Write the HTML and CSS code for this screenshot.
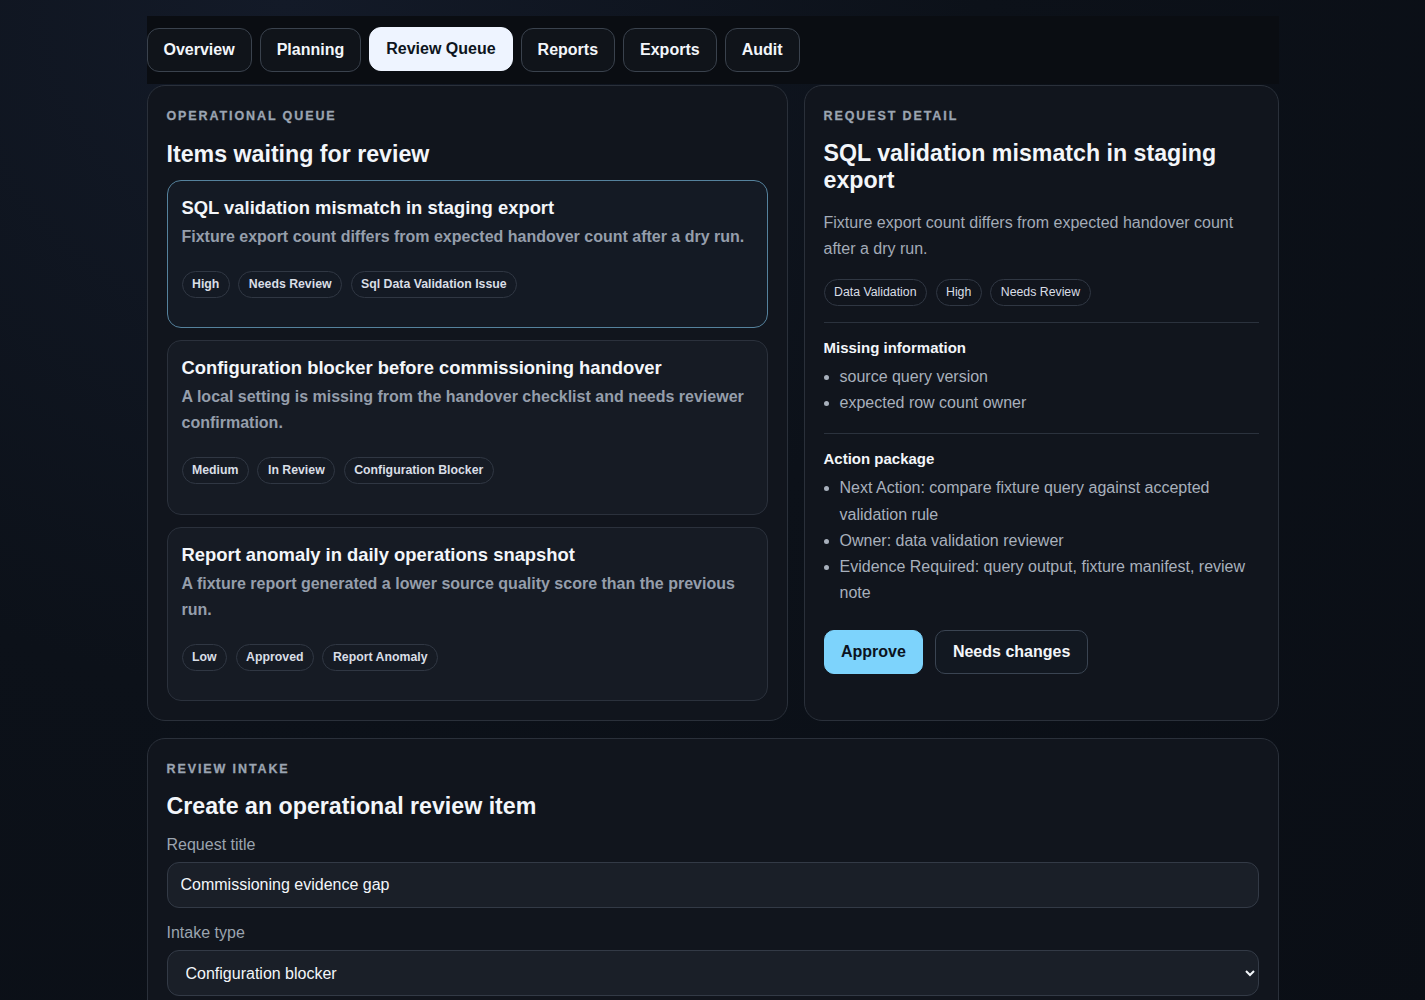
FILE: index.html
```html
<!DOCTYPE html>
<html lang="en">
<head>
    <meta charset="UTF-8">
    <meta name="viewport" content="width=device-width, initial-scale=1.0">
    <title>Review Queue</title>
    <link rel="stylesheet" href="styles.css">
</head>
<body>
    <div class="page">
        <nav class="tabs">
            <button class="tab">Overview</button>
            <button class="tab">Planning</button>
            <button class="tab active">Review Queue</button>
            <button class="tab">Reports</button>
            <button class="tab">Exports</button>
            <button class="tab">Audit</button>
        </nav>

        <div class="columns">
            <section class="panel">
                <p class="eyebrow">Operational queue</p>
                <h2 class="panel-title">Items waiting for review</h2>
                <div class="queue">
                    <article class="queue-item selected">
                        <h3>SQL validation mismatch in staging export</h3>
                        <p>Fixture export count differs from expected handover count after a dry run.</p>
                        <div class="tags">
                            <span class="tag">High</span>
                            <span class="tag">Needs Review</span>
                            <span class="tag">Sql Data Validation Issue</span>
                        </div>
                    </article>
                    <article class="queue-item">
                        <h3>Configuration blocker before commissioning handover</h3>
                        <p>A local setting is missing from the handover checklist and needs reviewer confirmation.</p>
                        <div class="tags">
                            <span class="tag">Medium</span>
                            <span class="tag">In Review</span>
                            <span class="tag">Configuration Blocker</span>
                        </div>
                    </article>
                    <article class="queue-item">
                        <h3>Report anomaly in daily operations snapshot</h3>
                        <p>A fixture report generated a lower source quality score than the previous run.</p>
                        <div class="tags">
                            <span class="tag">Low</span>
                            <span class="tag">Approved</span>
                            <span class="tag">Report Anomaly</span>
                        </div>
                    </article>
                </div>
            </section>

            <section class="panel detail">
                <p class="eyebrow">Request detail</p>
                <h2 class="detail-title">SQL validation mismatch in staging export</h2>
                <p class="detail-text">Fixture export count differs from expected handover count after a dry run.</p>
                <div class="tags plain">
                    <span class="tag">Data Validation</span>
                    <span class="tag">High</span>
                    <span class="tag">Needs Review</span>
                </div>
                <div class="detail-block">
                    <h4>Missing information</h4>
                    <ul>
                        <li>source query version</li>
                        <li>expected row count owner</li>
                    </ul>
                </div>
                <div class="detail-block">
                    <h4>Action package</h4>
                    <ul>
                        <li>Next Action: compare fixture query against accepted validation rule</li>
                        <li>Owner: data validation reviewer</li>
                        <li>Evidence Required: query output, fixture manifest, review note</li>
                    </ul>
                </div>
                <div class="actions">
                    <button class="btn primary">Approve</button>
                    <button class="btn">Needs changes</button>
                </div>
            </section>
        </div>

        <section class="panel intake">
            <p class="eyebrow">Review intake</p>
            <h2 class="panel-title">Create an operational review item</h2>
            <form class="intake-form">
                <label for="title">Request title</label>
                <input type="text" id="title" value="Commissioning evidence gap">
                <label for="type">Intake type</label>
                <select id="type">
                    <option>Configuration blocker</option>
                    <option>Data validation</option>
                    <option>Report anomaly</option>
                </select>
            </form>
        </section>
    </div>
</body>
</html>
```

FILE: styles.css
```css
* {
    box-sizing: border-box;
}
body {
    margin: 0;
    font-family: "Liberation Sans", Arial, sans-serif;
    color: #f3f6fa;
    background: radial-gradient(circle at 20% 0%, #131a28 0%, #0c1119 45%, #0a0e15 100%);
    min-height: 100vh;
}
.page {
    width: 1132px;
    margin: 0 auto;
    padding-top: 16px;
}
.tabs {
    display: flex;
    gap: 8px;
    padding: 12px 0;
    background-color: #0a0d12;
}
.tab {
    font-family: inherit;
    font-size: 16px;
    font-weight: 700;
    line-height: 18px;
    padding: 12px 16px;
    color: #f3f6fa;
    background-color: #10141a;
    border: 1px solid #3a424d;
    border-radius: 12px;
    cursor: pointer;
}
.tab.active {
    background-color: #eef4ff;
    color: #0d1420;
    border-color: #eef4ff;
    transform: translateY(-1px);
}
.columns {
    display: grid;
    grid-template-columns: 641px 475px;
    gap: 16px;
    margin-top: 1px;
}
.panel {
    background-color: #11151d;
    border: 1px solid #2a303a;
    border-radius: 18px;
    padding: 20px 19px 19px;
}
.eyebrow {
    margin: 3px 0 0;
    font-size: 12.5px;
    font-weight: 700;
    letter-spacing: 1.9px;
    text-transform: uppercase;
    color: #9ba4b1;
    -webkit-text-stroke: 0.3px #9ba4b1;
}
.panel-title {
    margin: 18px 0 13px;
    font-size: 23.2px;
    line-height: 26px;
}
.queue {
    display: flex;
    flex-direction: column;
    gap: 12px;
}
.queue-item {
    background-color: #161b24;
    border: 1px solid #2b313c;
    border-radius: 14px;
    padding: 15px 14px 29.4px;
}
.queue-item.selected {
    background-color: #141a24;
    border-color: #55829d;
}
.queue-item h3 {
    margin: 0;
    font-size: 18.4px;
    line-height: 24px;
}
.queue-item p {
    margin: 4px 0 0;
    font-size: 16px;
    font-weight: 700;
    line-height: 26px;
    color: #959eab;
}
.tags {
    display: flex;
    flex-wrap: wrap;
    gap: 8.5px;
    margin-top: 21px;
}
.tag {
    font-size: 12.3px;
    font-weight: 700;
    line-height: 15px;
    padding: 5px 9.5px;
    color: #d9dee6;
    border: 1px solid #303743;
    border-radius: 999px;
}
.tags.plain {
    margin-top: 17px;
}
.tags.plain .tag {
    font-weight: 400;
}
.detail-title {
    margin: 17px 0 0;
    font-size: 23.2px;
    line-height: 27px;
}
.detail-text {
    margin: 16px 0 0;
    font-size: 16px;
    line-height: 26px;
    color: #a3abb7;
}
.detail-block {
    border-top: 1px solid #2b323d;
    margin-top: 16px;
    padding-top: 16px;
}
.detail-block h4 {
    margin: 0;
    font-size: 15px;
    line-height: 18px;
}
.detail-block ul {
    margin: 7px 0 0;
    padding-left: 16px;
}
.detail-block li {
    font-size: 16px;
    line-height: 26.2px;
    color: #a8b0bc;
}
.detail-block + .detail-block {
    margin-top: 17px;
}
.actions {
    display: flex;
    gap: 12px;
    margin-top: 24px;
    padding-bottom: 26px;
}
.btn {
    font-family: inherit;
    font-size: 16px;
    font-weight: 700;
    line-height: 18px;
    padding: 12px 16.5px;
    color: #f3f6fa;
    background-color: #121821;
    border: 1px solid #3a4452;
    border-radius: 10px;
    cursor: pointer;
}
.btn.primary {
    background-color: #7dd3fc;
    border-color: #7dd3fc;
    color: #0b1220;
}
.intake {
    margin-top: 17px;
    padding-bottom: 40px;
}
.intake .panel-title {
    margin: 17px 0 0;
}
.intake-form label {
    display: block;
    margin-top: 15px;
    font-size: 16px;
    line-height: 20px;
    color: #9ba4af;
}
.intake-form label:first-child {
    margin-top: 16px;
}
.intake-form input, .intake-form select {
    display: block;
    width: 100%;
    margin-top: 7px;
    height: 46px;
    padding: 0 13px;
    font-family: inherit;
    font-size: 16px;
    color: #f3f6fa;
    background-color: #1a1f28;
    border: 1px solid #333a46;
    border-radius: 12px;
}
.intake-form select {
    padding: 0 13px 0 14px;
}
```
